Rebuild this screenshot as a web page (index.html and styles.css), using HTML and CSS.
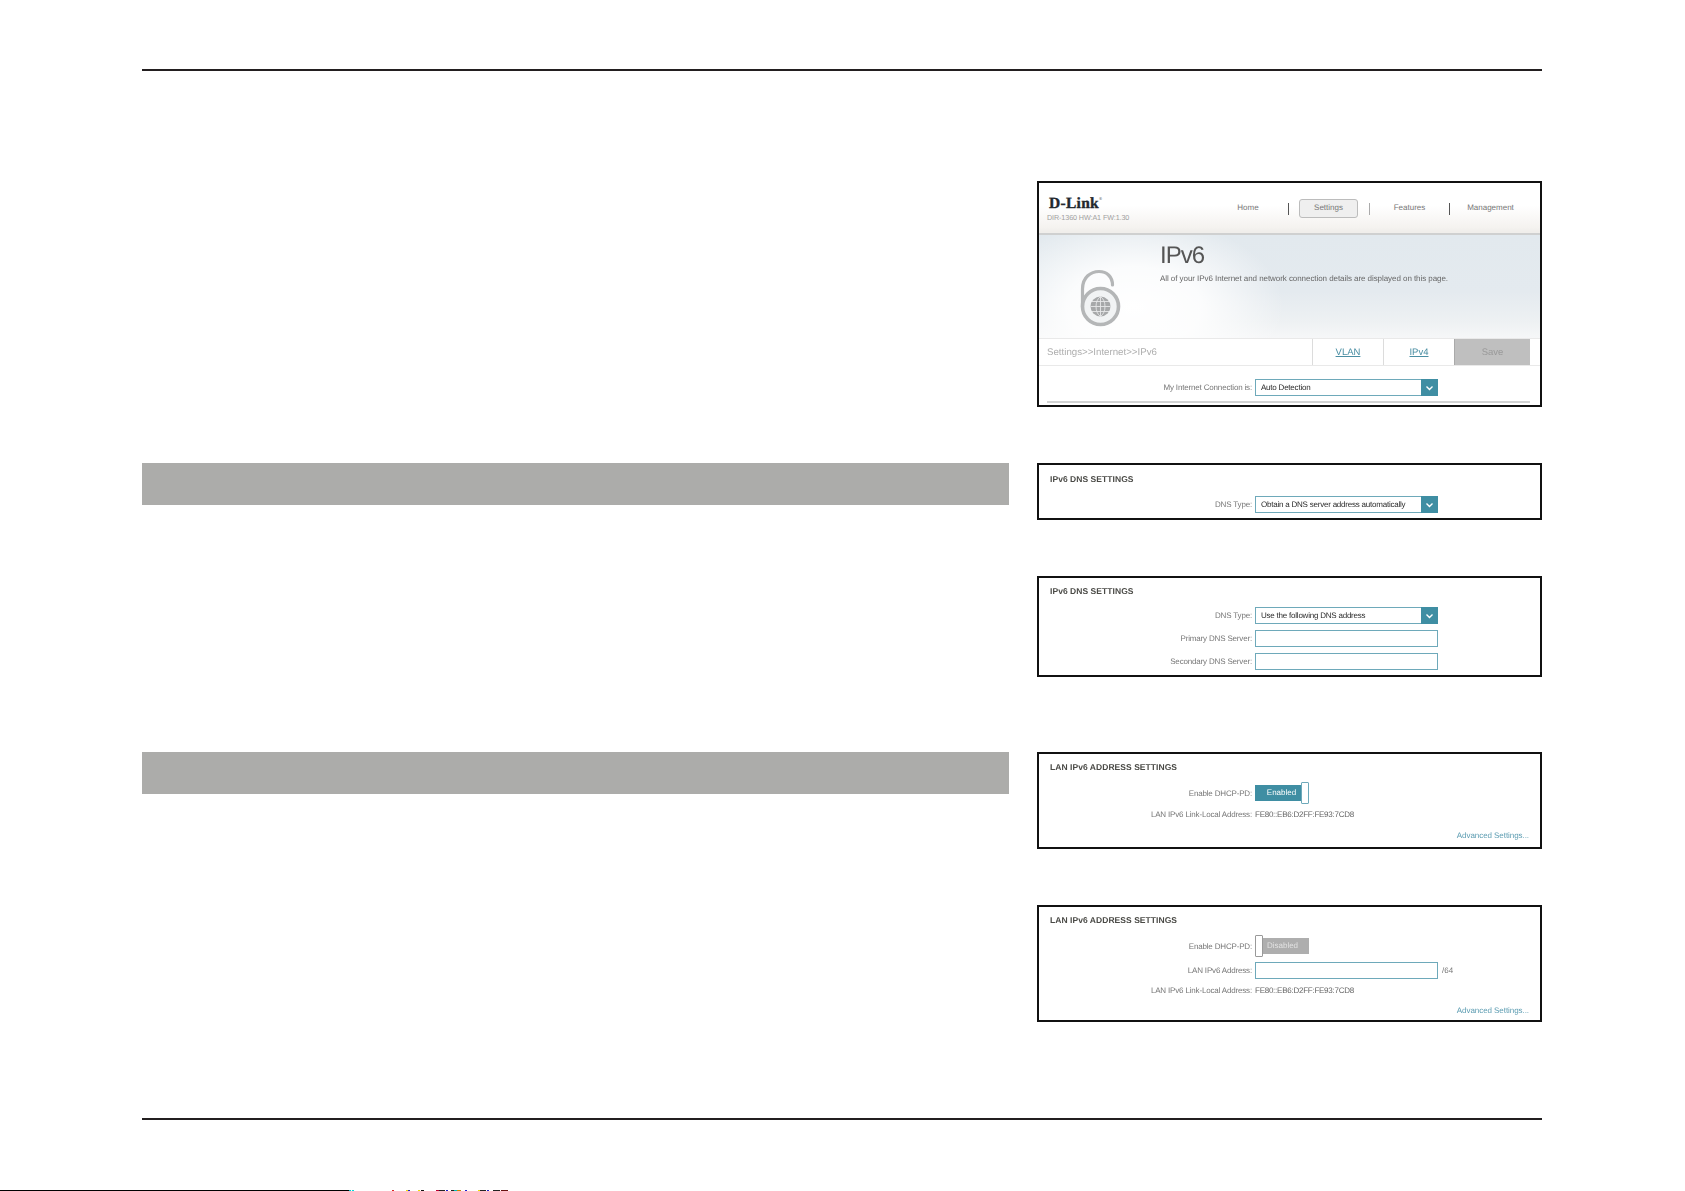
FILE: index.html
```html
<!DOCTYPE html>
<html lang="en">
<head>
<meta charset="utf-8">
<title>IPv6 settings manual page</title>
<link rel="stylesheet" href="styles.css">
</head>
<body>
<div class="sheet">
  <div class="rule"></div>
  <div class="columns">
    <div class="text-col">
      <div class="bar bar-dns"></div>
      <div class="bar bar-lan"></div>
    </div>
    <div class="shots">
      <section class="shot shot-main">
        <div class="soft">
          <header class="router-head">
            <div class="brand">
              <div class="logo">D-Link<sup class="tm">®</sup></div>
              <div class="model">DIR-1360 HW:A1 FW:1.30</div>
            </div>
            <nav class="nav">
              <span class="nav-item">Home</span>
              <span class="nav-sep"></span>
              <span class="nav-tab">Settings</span>
              <span class="nav-sep nav-sep-light"></span>
              <span class="nav-item nav-features">Features</span>
              <span class="nav-sep"></span>
              <span class="nav-item nav-last">Management</span>
            </nav>
          </header>
          <div class="hero">
            <svg class="lock" width="60" height="70" viewBox="0 0 60 70" aria-hidden="true">
              <path d="M12.500 45V27C12.500 15 21 9.500 29 9.500C37 9.500 42.500 15 42.500 23" fill="none" stroke="#b4b6b7" stroke-width="3.200" stroke-linecap="round"/>
              <circle cx="30.500" cy="44.500" r="18" fill="#f1f3f4" stroke="#b4b6b7" stroke-width="3.600"/>
              <circle cx="30.500" cy="44.500" r="10" fill="#a6a8a9"/>
              <path d="M20.500 44.500H40.500M22 39.500H39M22 49.500H39M30.500 34.500V54.500M30.500 34.500C24.500 38.500 24.500 50.500 30.500 54.500M30.500 34.500C36.500 38.500 36.500 50.500 30.500 54.500" fill="none" stroke="#e6e8e9" stroke-width=".9"/>
            </svg>
            <div class="hero-copy">
              <h1 class="hero-title">IPv6</h1>
              <p class="hero-desc">All of your IPv6 Internet and network connection details are displayed on this page.</p>
            </div>
          </div>
          <div class="crumb-bar">
            <span class="crumb">Settings&gt;&gt;Internet&gt;&gt;IPv6</span>
            <a class="crumb-link">VLAN</a>
            <a class="crumb-link">IPv4</a>
            <span class="crumb-save">Save</span>
          </div>
          <div class="row row-conn">
            <span class="label">My Internet Connection is:</span>
            <div class="select"><span class="select-text">Auto Detection</span><span class="select-arrow"><svg width="9" height="6" viewBox="0 0 9 6"><path d="M1.500 1.500L4.500 4.500L7.500 1.500" fill="none" stroke="#fff" stroke-width="1.400"/></svg></span></div>
          </div>
          <div class="shot-foot"></div>
        </div>
      </section>

      <section class="shot shot-dns-a">
        <div class="soft">
          <h2 class="title title-9">IPv6 DNS SETTINGS</h2>
          <div class="row row-first-12">
            <span class="label">DNS Type:</span>
            <div class="select"><span class="select-text">Obtain a DNS server address automatically</span><span class="select-arrow"><svg width="9" height="6" viewBox="0 0 9 6"><path d="M1.500 1.500L4.500 4.500L7.500 1.500" fill="none" stroke="#fff" stroke-width="1.400"/></svg></span></div>
          </div>
        </div>
      </section>

      <section class="shot shot-dns-b">
        <div class="soft">
          <h2 class="title">IPv6 DNS SETTINGS</h2>
          <div class="row row-first-11">
            <span class="label">DNS Type:</span>
            <div class="select"><span class="select-text">Use the following DNS address</span><span class="select-arrow"><svg width="9" height="6" viewBox="0 0 9 6"><path d="M1.500 1.500L4.500 4.500L7.500 1.500" fill="none" stroke="#fff" stroke-width="1.400"/></svg></span></div>
          </div>
          <div class="row row-gap-6">
            <span class="label">Primary DNS Server:</span>
            <div class="input"></div>
          </div>
          <div class="row row-gap-6">
            <span class="label">Secondary DNS Server:</span>
            <div class="input"></div>
          </div>
        </div>
      </section>

      <section class="shot shot-lan-a">
        <div class="soft">
          <h2 class="title">LAN IPv6 ADDRESS SETTINGS</h2>
          <div class="row row-first-10">
            <span class="label">Enable DHCP-PD:</span>
            <div class="toggle toggle-on"><span class="toggle-fill">Enabled</span><span class="toggle-knob"></span></div>
          </div>
          <div class="row row-gap-5 row-text">
            <span class="label">LAN IPv6 Link-Local Address:</span>
            <span class="value">FE80::EB6:D2FF:FE93:7CD8</span>
          </div>
          <a class="advanced">Advanced Settings...</a>
        </div>
      </section>

      <section class="shot shot-lan-b">
        <div class="soft">
          <h2 class="title">LAN IPv6 ADDRESS SETTINGS</h2>
          <div class="row row-first-10">
            <span class="label">Enable DHCP-PD:</span>
            <div class="toggle toggle-off"><span class="toggle-knob"></span><span class="toggle-fill">Disabled</span></div>
          </div>
          <div class="row row-gap-5">
            <span class="label">LAN IPv6 Address:</span>
            <div class="input"></div>
            <span class="suffix">/64</span>
          </div>
          <div class="row row-gap-6 row-text">
            <span class="label">LAN IPv6 Link-Local Address:</span>
            <span class="value">FE80::EB6:D2FF:FE93:7CD8</span>
          </div>
          <a class="advanced advanced-11">Advanced Settings...</a>
        </div>
      </section>
    </div>
  </div>
  <div class="rule rule-bottom"></div>
</div>
<svg class="scanline" width="510" height="1" viewBox="0 0 510 1" aria-hidden="true">
  <rect x="0" width="349" height="1" fill="#000"/>
  <rect x="349" width="2" height="1" fill="#0cc"/>
  <rect x="352" width="2" height="1" fill="#0dd"/>
  <rect x="392" width="2" height="1" fill="#d22"/>
  <rect x="406" width="2" height="1" fill="#ed0"/>
  <rect x="408" width="2" height="1" fill="#22c"/>
  <rect x="418" width="2" height="1" fill="#ed0"/>
  <rect x="421" width="3" height="1" fill="#111"/>
  <rect x="436" width="3" height="1" fill="#b03"/>
  <rect x="439" width="6" height="1" fill="#222"/>
  <rect x="446" width="2" height="1" fill="#22c"/>
  <rect x="451" width="3" height="1" fill="#222"/>
  <rect x="454" width="3" height="1" fill="#0bb"/>
  <rect x="457" width="4" height="1" fill="#c80"/>
  <rect x="465" width="2" height="1" fill="#22c"/>
  <rect x="478" width="2" height="1" fill="#ed0"/>
  <rect x="480" width="6" height="1" fill="#222"/>
  <rect x="487" width="2" height="1" fill="#22c"/>
  <rect x="493" width="7" height="1" fill="#222"/>
  <rect x="501" width="7" height="1" fill="#611"/>
</svg>
</body>
</html>
```
FILE: styles.css
```css
* { box-sizing: border-box; }
html, body { margin: 0; padding: 0; background: #fff; }
body {
  width: 1685px;
  height: 1191px;
  overflow: hidden;
  display: flex;
  flex-direction: column;
  font-family: "Liberation Sans", Arial, sans-serif;
  font-size: 8px;
  color: #666;
  text-rendering: geometricPrecision;
}
.sheet {
  flex: 1;
  display: flex;
  flex-direction: column;
  padding: 69px 143px 70px 142px;
}
.rule { height: 2px; background: #231f20; }
.rule-bottom { margin-top: auto; }
.scanline { display: block; flex: none; }

.columns {
  display: grid;
  grid-template-columns: 867px 505px;
  column-gap: 28px;
}
.bar { background: #acacaa; height: 42px; }
.bar-dns { margin-top: 392px; }
.bar-lan { margin-top: 247px; }

.shots { display: flex; flex-direction: column; }
.shot { border: 2px solid #111; background: #fff; overflow: hidden; }
.soft { filter: blur(.3px); }
.shot-main { margin-top: 110px; height: 226px; }
.shot-dns-a { margin-top: 56px; padding-bottom: 5px; }
.shot-dns-b { margin-top: 56px; padding-bottom: 5px; }
.shot-lan-a { margin-top: 75px; padding-bottom: 6px; }
.shot-lan-b { margin-top: 56px; padding-bottom: 4px; }

/* router page header */
.router-head {
  height: 52px;
  display: flex;
  justify-content: space-between;
  align-items: flex-start;
  background: linear-gradient(180deg, #fff 0, #fff 45%, #f4f2ef 90%, #f0eeeb 96%);
  border-bottom: 2px solid #cfd0d0;
}
.brand { padding: 13px 0 0 8px; }
.logo {
  font-family: "Liberation Serif", serif;
  font-weight: 700;
  font-size: 15.500px;
  line-height: 15px;
  color: #23282e;
  padding-left: 2px;
  letter-spacing: .3px;
  -webkit-text-stroke: .35px #23282e;
}
.tm { font-size: 4px; line-height: 0; vertical-align: 8px; font-weight: 400; -webkit-text-stroke: 0; }
.model { font-size: 7.200px; line-height: 9px; margin-top: 2px; color: #a0a0a0; letter-spacing: -.1px; }
.nav { display: flex; align-items: center; height: 19px; margin-top: 16px; padding-right: 9px; font-size: 8px; color: #777; }
.nav-item { width: 80px; text-align: center; margin-bottom: 2px; }
.nav-features { width: 79px; }
.nav-last { width: 81px; }
.nav-sep { width: 1px; height: 12px; background: #555; }
.nav-sep-light { background: #aaa; }
.nav-tab {
  width: 59px;
  height: 19px;
  margin: 0 11px 0 10px;
  line-height: 16px;
  text-align: center;
  background: #efefef;
  border: 1px solid #bcbcbc;
  border-radius: 3px;
}

/* hero */
.hero {
  height: 103px;
  display: flex;
  background:
    radial-gradient(ellipse 150px 90px at 95px 72px, #fff 0, rgba(255,255,255,.85) 45%, rgba(255,255,255,0) 100%),
    linear-gradient(180deg, #e2e9ee 0, #e4eaef 55%, #eef1f3 85%, #f6f7f8 100%);
}
.lock { flex: none; margin: 27px 0 0 31px; }
.hero-copy { padding: 6px 0 0 30px; }
.hero-title { margin: 0; font-size: 24px; line-height: 29px; font-weight: 400; color: #555; letter-spacing: -1px; }
.hero-desc { margin: 4px 0 0; font-size: 8px; line-height: 10px; color: #666; letter-spacing: -.06px; }

/* breadcrumb bar */
.crumb-bar {
  height: 28px;
  display: flex;
  align-items: stretch;
  padding-right: 10px;
  background: #fff;
  border-top: 1px solid #e9e9e9;
  border-bottom: 1px solid #e9e9e9;
  line-height: 28px;
}
.crumb { flex: 1; padding-left: 8px; font-size: 9.700px; color: #aeaeae; }
.crumb-link {
  width: 71px;
  text-align: center;
  font-size: 9.500px;
  color: #4a8ea3;
  text-decoration: underline;
  border-left: 1px solid #dcdcdc;
}
.crumb-save {
  width: 76px;
  text-align: center;
  font-size: 9.500px;
  color: #999;
  background: #bfbfbf;
  border-left: 1px solid #aaa;
}

/* form rows */
.title {
  margin: 0;
  padding: 8px 0 0 11px;
  font-size: 8.500px;
  line-height: 10px;
  font-weight: 700;
  color: #4a4a46;
  letter-spacing: .05px;
}
.title-9 { padding-top: 9px; }
.row { display: flex; align-items: center; }
.row-conn { margin-top: 13px; }
.row-first-12 { margin-top: 12px; }
.row-first-11 { margin-top: 11px; }
.row-first-10 { margin-top: 10px; }
.row-gap-5 { margin-top: 5px; }
.row-gap-6 { margin-top: 6px; }
.row-text { height: 10px; }
.label {
  flex: none;
  width: 213px;
  text-align: right;
  font-size: 8px;
  letter-spacing: -.17px;
  color: #777;
  margin-right: 3px;
}
.value { font-size: 8px; letter-spacing: -.25px; color: #666; }
.select, .input {
  flex: none;
  width: 183px;
  height: 17px;
  border: 1px solid #6ea9ba;
  background: #fff;
}
.select { display: flex; align-items: stretch; justify-content: space-between; }
.select-text { padding-left: 5px; font-size: 8px; letter-spacing: -.22px; line-height: 15px; color: #2a2a2a; }
.select-arrow {
  width: 17px;
  margin: -1px -1px -1px 0;
  background: #3f8ea3;
  display: flex;
  align-items: center;
  justify-content: center;
}
.suffix { margin-left: 4px; font-size: 8px; color: #777; }
.shot-foot { height: 2px; margin: 5px 10px 0 8px; background: #d2d3d3; }
.toggle { flex: none; width: 54px; height: 22px; display: flex; align-items: center; }
.toggle-fill { flex: 1; height: 16px; font-size: 8px; line-height: 16px; text-align: center; color: #fff; }
.toggle-knob { flex: none; width: 8px; height: 22px; background: #fff; border: 1px solid #6ea9ba; border-radius: 1px; }
.toggle-on .toggle-fill { background: #3f8ea3; padding-left: 7px; }
.toggle-off .toggle-fill { background: #aeaeae; color: #e2e2e2; padding-right: 7px; }
.toggle-off .toggle-knob { border-color: #999; }
.advanced {
  display: block;
  margin-top: 12px;
  padding-right: 11px;
  text-align: right;
  font-size: 8px;
  letter-spacing: -.06px;
  line-height: 10px;
  color: #5d9db2;
}
.advanced-11 { margin-top: 11px; }
```
